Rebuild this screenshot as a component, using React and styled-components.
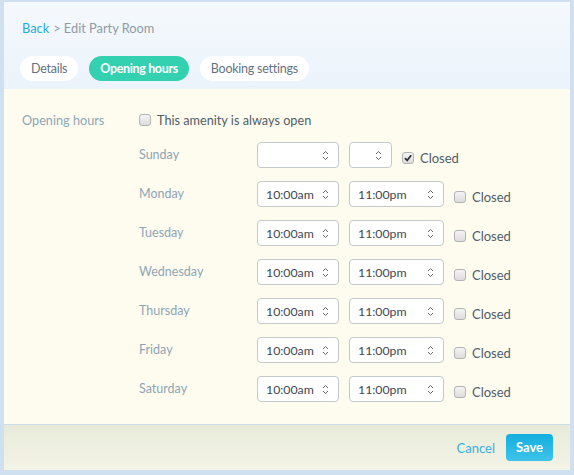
import React from 'react';
import styled, { createGlobalStyle } from 'styled-components';

const GlobalStyle = createGlobalStyle`
  html, body {
    margin: 0;
    padding: 0;
    background: #cfe0f1;
  }
  body {
    font-family: Lato, "Open Sans", sans-serif;
  }
`;

const days = [
  { name: 'Sunday', open: '', close: '', closed: true },
  { name: 'Monday', open: '10:00am', close: '11:00pm', closed: false },
  { name: 'Tuesday', open: '10:00am', close: '11:00pm', closed: false },
  { name: 'Wednesday', open: '10:00am', close: '11:00pm', closed: false },
  { name: 'Thursday', open: '10:00am', close: '11:00pm', closed: false },
  { name: 'Friday', open: '10:00am', close: '11:00pm', closed: false },
  { name: 'Saturday', open: '10:00am', close: '11:00pm', closed: false },
];

const tabs = ['Details', 'Opening hours', 'Booking settings'];

function Chevrons() {
  return (
    <svg width="7" height="11" viewBox="0 0 7 11">
      <path d="M1 4 L3.5 1.5 L6 4" fill="none" stroke="#666" strokeWidth="1" />
      <path d="M1 7 L3.5 9.5 L6 7" fill="none" stroke="#666" strokeWidth="1" />
    </svg>
  );
}

function CheckBox({ checked }) {
  return (
    <Box>
      {checked && (
        <svg width="10" height="10" viewBox="0 0 10 10">
          <path d="M2 5.2 L4.2 7.4 L8.2 2.2" fill="none" stroke="#333" strokeWidth="1.8" />
        </svg>
      )}
    </Box>
  );
}

function App() {
  return (
    <>
      <GlobalStyle />
      <Frame>
        <Panel>
          <Header>
            <Crumbs>
              <BackLink>Back</BackLink>
              <CrumbRest>&gt; Edit Party Room</CrumbRest>
            </Crumbs>
            <Tabs>
              {tabs.map((t) => (
                <Tab key={t} $active={t === 'Opening hours'}>{t}</Tab>
              ))}
            </Tabs>
          </Header>
          <Body>
            <FieldLabel>Opening hours</FieldLabel>
            <Content>
              <AlwaysRow>
                <CheckBox />
                <AlwaysText>This amenity is always open</AlwaysText>
              </AlwaysRow>
              <DayList>
                {days.map((d) => (
                  <DayRow key={d.name}>
                    <DayName>{d.name}</DayName>
                    <Select $w={82}>
                      <span>{d.open}</span>
                      <Chevrons />
                    </Select>
                    <Select $w={d.closed ? 43 : 95}>
                      <span>{d.close}</span>
                      <Chevrons />
                    </Select>
                    <ClosedLabel>
                      <CheckBox checked={d.closed} />
                      <span>Closed</span>
                    </ClosedLabel>
                  </DayRow>
                ))}
              </DayList>
            </Content>
          </Body>
          <Footer>
            <CancelLink>Cancel</CancelLink>
            <SaveButton>Save</SaveButton>
          </Footer>
        </Panel>
      </Frame>
    </>
  );
}

export default App;

const Frame = styled.div`
  padding: 2px 4px 5px 4px;
  height: 475px;
  box-sizing: border-box;
`;

const Panel = styled.div`
  display: flex;
  flex-direction: column;
  height: 468px;
`;

const Header = styled.div`
  height: 87px;
  box-sizing: border-box;
  padding: 18px 16px 0 16px;
  background: linear-gradient(#f5f9fd, #ebf3fb);
`;

const Crumbs = styled.div`
  display: flex;
  gap: 4px;
  font-size: 12.8px;
  line-height: 16px;
  padding-left: 2px;
`;

const BackLink = styled.span`
  color: #22ade0;
`;

const CrumbRest = styled.span`
  color: #8f9ba6;
`;

const Tabs = styled.div`
  display: flex;
  gap: 11px;
  margin-top: 20px;
`;

const Tab = styled.div`
  height: 25px;
  line-height: 25px;
  padding: 0 11px;
  border-radius: 13px;
  font-size: 12.5px;
  letter-spacing: ${(p) => (p.$active ? '-0.35px' : '-0.25px')};
  font-weight: ${(p) => (p.$active ? 700 : 400)};
  background: ${(p) => (p.$active ? '#33d1b0' : '#ffffff')};
  color: ${(p) => (p.$active ? '#ffffff' : '#66737f')};
`;

const Body = styled.div`
  flex: 1;
  display: flex;
  padding: 23px 0 0 18px;
  background: #fefcef;
  border-bottom: 1px solid #c9dcec;
`;

const FieldLabel = styled.div`
  width: 117px;
  font-size: 12.7px;
  line-height: 16px;
  color: #8da5b6;
`;

const Content = styled.div`
  display: flex;
  flex-direction: column;
`;

const AlwaysRow = styled.div`
  display: flex;
  align-items: center;
  gap: 6px;
  height: 16px;
`;

const AlwaysText = styled.span`
  font-size: 12.7px;
  color: #505c68;
`;

const DayList = styled.div`
  display: flex;
  flex-direction: column;
  gap: 13px;
  margin-top: 14px;
`;

const DayRow = styled.div`
  display: flex;
  align-items: center;
  height: 26px;
`;

const DayName = styled.div`
  width: 118px;
  font-size: 12.5px;
  color: #8ea5b6;
  margin-top: -2px;
`;

const Select = styled.div`
  width: ${(p) => p.$w}px;
  height: 26px;
  box-sizing: border-box;
  margin-right: 10px;
  padding: 0 9px 0 8px;
  display: flex;
  align-items: center;
  justify-content: space-between;
  border: 1px solid #c4c9cc;
  border-radius: 4px;
  background: #ffffff;
  font-size: 12.3px;
  color: #3f4850;
`;

const ClosedLabel = styled.div`
  display: flex;
  align-items: center;
  gap: 6px;
  margin-top: 5px;
  font-size: 13px;
  color: #505c68;
`;

const Box = styled.div`
  width: 12px;
  height: 12px;
  box-sizing: border-box;
  border: 1px solid #b3b3b3;
  border-radius: 3px;
  background: linear-gradient(#f4f4f4, #dddddd);
  display: flex;
  align-items: center;
  justify-content: center;
`;

const Footer = styled.div`
  height: 45px;
  box-sizing: border-box;
  display: flex;
  align-items: center;
  justify-content: flex-end;
  gap: 11px;
  padding: 0 17px 0 0;
  background: linear-gradient(#e8ebd9, #f3f3e6);
`;

const CancelLink = styled.span`
  font-size: 13px;
  color: #3aaee0;
  margin-top: 1px;
`;

const SaveButton = styled.button`
  width: 47px;
  height: 27px;
  border: none;
  border-radius: 4px;
  background: linear-gradient(#13aedf, #3ec4ea);
  color: #ffffff;
  font-family: inherit;
  font-size: 13px;
  font-weight: 700;
  padding: 0;
  margin-top: -1px;
`;
